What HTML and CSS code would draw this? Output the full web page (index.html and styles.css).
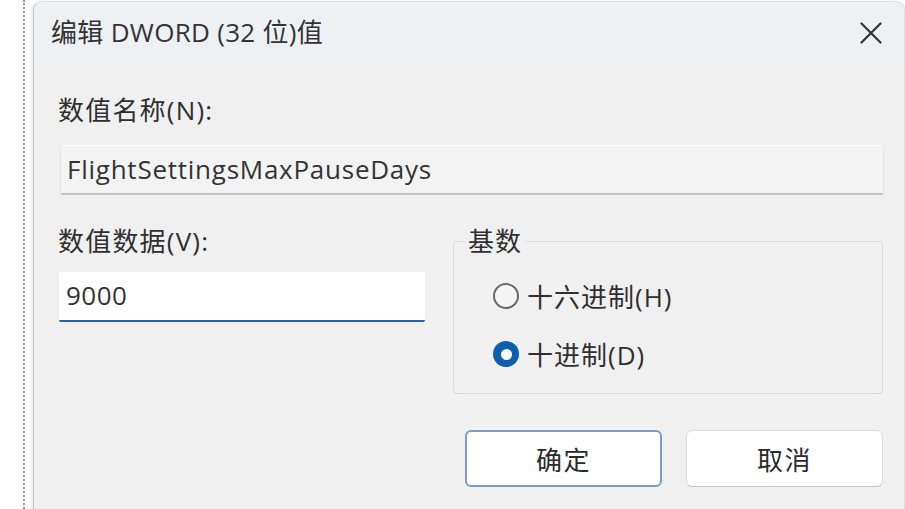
FILE: index.html
```html
<!DOCTYPE html>
<html lang="zh-CN">
<head>
<meta charset="utf-8">
<title>编辑 DWORD (32 位)值</title>
<link rel="stylesheet" href="styles.css">
</head>
<body>
<div class="desk">
  <div class="dots"></div>
  <div class="dialog">
    <div class="titlebar">
      <span class="title">编辑 DWORD (32 位)值</span>
      <span class="close" aria-label="关闭">
        <svg width="22" height="22" viewBox="0 0 22 22"><path d="M1.5 1.5 L20.5 20.5 M20.5 1.5 L1.5 20.5" stroke="#333" stroke-width="2.2" stroke-linecap="round" fill="none"/></svg>
      </span>
    </div>
    <div class="content">
      <div class="lbl">数值名称(N):</div>
      <div class="namefield">FlightSettingsMaxPauseDays</div>
      <div class="row">
        <div class="datacol">
          <div class="lbl">数值数据(V):</div>
          <div class="valuefield">9000</div>
        </div>
        <fieldset class="base">
          <legend>基数</legend>
          <div class="radios">
            <div class="radio"><span class="dot"></span><span>十六进制(H)</span></div>
            <div class="radio checked"><span class="dot"></span><span>十进制(D)</span></div>
          </div>
        </fieldset>
      </div>
      <div class="buttons">
        <div class="btn primary">确定</div>
        <div class="btn">取消</div>
      </div>
    </div>
  </div>
</div>
</body>
</html>
```

FILE: styles.css
```css
html, body {
  margin: 0;
  padding: 0;
  background: #ffffff;
}
body {
  width: 905px;
  height: 509px;
  overflow: hidden;
  font-family: "Open Sans", "Noto Sans CJK SC", sans-serif;
  color: #2b2b2b;
}
.desk {
  display: flex;
  height: 509px;
}
.dots {
  width: 0;
  margin-left: 23px;
  border-left: 2px dotted #9a9a9a;
  height: 509px;
}
.dialog {
  width: 871px;
  margin-left: 8px;
  margin-top: 1px;
  background: #f0f0f0;
  border-left: 1px solid #c6c6c6;
  border-top: 1px solid #dedede;
  border-right: 1px solid #dedede;
  border-radius: 9px 9px 0 0;
  box-shadow: -2px 0 3px rgba(0,0,0,0.08);
  display: flex;
  flex-direction: column;
}
.titlebar {
  height: 64px;
  background: #eef1f3;
  border-radius: 9px 9px 0 0;
  display: flex;
  align-items: center;
  justify-content: space-between;
  padding: 0 22px 0 17px;
}
.title {
  font-size: 26px;
  letter-spacing: 0.3px;
  line-height: 30px;
  color: #333;
  margin-top: -4px;
}
.close {
  display: flex;
  width: 22px;
  height: 22px;
  margin-top: -3px;
}
.content {
  padding: 29px 20px 0 24px;
  display: flex;
  flex-direction: column;
}
.lbl {
  font-size: 26px;
  letter-spacing: 1.2px;
  line-height: 30px;
  height: 30px;
  color: #2f2f2f;
}
.namefield {
  margin: 20px 0 0 2px;
  height: 50px;
  box-sizing: border-box;
  background: #f3f3f3;
  border: 1px solid #e4e4e4;
  border-top-color: #fafafa;
  border-bottom: 2px solid #c4c4c4;
  border-radius: 3px;
  font-size: 26px;
  letter-spacing: 0.75px;
  line-height: 46px;
  padding-left: 6px;
  color: #333;
}
.row {
  display: flex;
  margin-top: 31px;
  gap: 28px;
}
.datacol {
  width: 367px;
  display: flex;
  flex-direction: column;
}
.valuefield {
  margin: 16px 0 0 1px;
  height: 50px;
  box-sizing: border-box;
  background: #ffffff;
  border-bottom: 2px solid #2d5fae;
  border-radius: 2px;
  font-size: 26px;
  letter-spacing: 0.5px;
  line-height: 46px;
  padding-left: 7px;
  color: #333;
}
.base {
  margin: 0;
  width: 430px;
  box-sizing: border-box;
  border: 1px solid #dadada;
  border-radius: 4px;
  padding: 0 11px 17px;
  height: 168px;
}
.base legend {
  font-size: 26px;
  letter-spacing: 1px;
  line-height: 30px;
  padding: 0 3px;
  color: #2f2f2f;
}
.radios {
  display: flex;
  flex-direction: column;
  gap: 18px;
  margin-top: 20px;
  padding-left: 28px;
}
.radio {
  display: flex;
  align-items: center;
  gap: 8px;
  height: 40px;
  font-size: 26px;
  letter-spacing: 1px;
  color: #2f2f2f;
}
.dot {
  width: 26px;
  height: 26px;
  box-sizing: border-box;
  border-radius: 50%;
  border: 2px solid #6a6a6a;
  background: #f5f5f5;
  display: flex;
  align-items: center;
  justify-content: center;
}
.radio.checked .dot {
  border: none;
  background: #0d5eb0;
}
.radio.checked .dot::after {
  content: "";
  width: 11px;
  height: 11px;
  border-radius: 50%;
  background: #ffffff;
}
.buttons {
  display: flex;
  justify-content: flex-end;
  gap: 24px;
  margin-top: 36px;
  padding-right: 1px;
}
.btn {
  width: 197px;
  height: 57px;
  box-sizing: border-box;
  background: #ffffff;
  border: 1px solid #dcdcdc;
  border-bottom-color: #c8c8c8;
  border-radius: 6px;
  font-size: 26px;
  letter-spacing: 1.5px;
  display: flex;
  align-items: center;
  justify-content: center;
  color: #2b2b2b;
}
.btn.primary {
  border: 2px solid #7d9cc8;
}
```
